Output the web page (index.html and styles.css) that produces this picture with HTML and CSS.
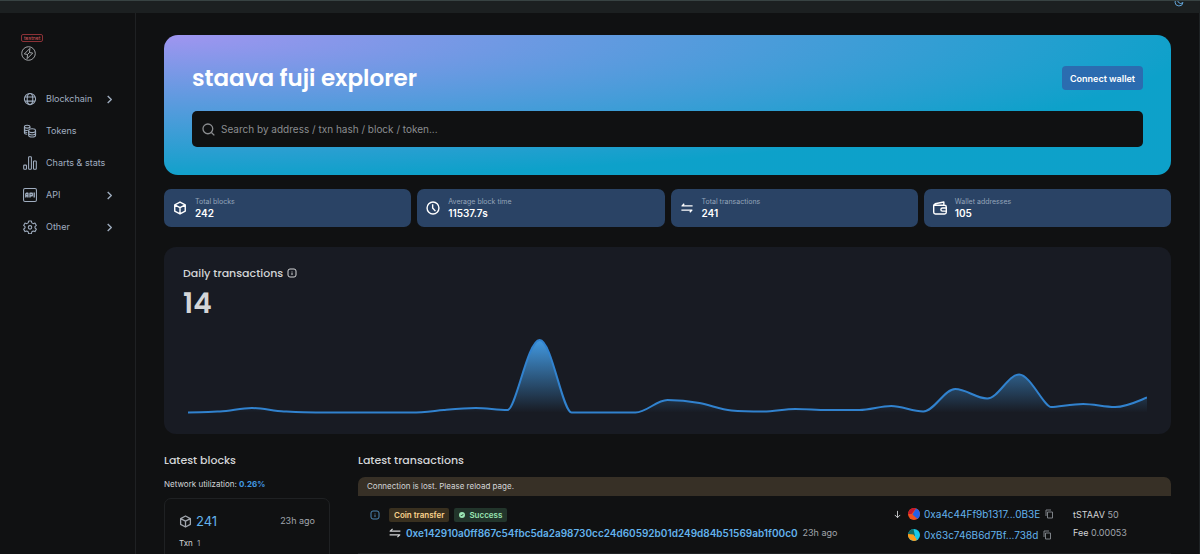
FILE: index.html
```html
<!DOCTYPE html>
<html lang="en">
<head>
  <meta charset="UTF-8">
  <meta name="viewport" content="width=device-width, initial-scale=1.0">
  <title>staava fuji explorer</title>
  <link rel="stylesheet" href="styles.css">
</head>
<body>

<!-- Shared icons -->
<svg class="sprite" aria-hidden="true">
  <symbol id="cube" viewBox="0 0 20 20">
    <path d="M10 1.500l7.500 4v9L10 18.500l-7.500-4v-9zM2.500 5.500l7.500 4 7.500-4M10 9.500v9"/>
  </symbol>
  <symbol id="chevron" viewBox="0 0 20 20">
    <path d="M6 2l8 8-8 8"/>
  </symbol>
  <symbol id="swap" viewBox="0 0 20 20">
    <path d="M19 7H2l4-4M1 13h17l-4 4"/>
  </symbol>
  <symbol id="info" viewBox="0 0 20 20">
    <rect x="2" y="2" width="16" height="16" rx="4"/>
    <path d="M10 9v5M10 6v1"/>
  </symbol>
  <symbol id="copy" viewBox="0 0 20 20">
    <path d="M7 6h10v12H7zM4 14V2h10"/>
  </symbol>
</svg>

<header class="topbar">
  <button class="theme-toggle" type="button" aria-label="Toggle color mode">
    <svg class="icon" viewBox="0 0 20 20"><path d="M9 2a8 8 0 1 0 9 9 5 5 0 0 1-9-9zM13 3v3M16 6h2"/></svg>
  </button>
</header>

<div class="layout">

  <!-- Sidebar -->
  <aside class="sidebar">
    <a class="brand" href="#" aria-label="Home">
      <span class="net-label">testnet</span>
      <svg class="logo" viewBox="0 0 32 32">
        <circle cx="16" cy="16" r="14.5"/>
        <path d="M19 5L7 17l7 1-1 9 12-12-7-1zM14 18l4-4"/>
      </svg>
    </a>
    <nav class="nav">
      <a class="nav-item" href="#">
        <svg class="nav-icon" viewBox="0 0 20 20"><circle cx="10" cy="10" r="8"/><ellipse cx="10" cy="10" rx="4" ry="8"/><path d="M3 7h14M3 13h14"/></svg>
        <span>Blockchain</span>
        <svg class="chevron"><use href="#chevron"/></svg>
      </a>
      <a class="nav-item" href="#">
        <svg class="nav-icon" viewBox="0 0 20 20"><path d="M2 4v8.500c0 1 2 2 4 2M2 4c0-3 8-3 8 0v2M2 4c0 2.500 8 2.500 8 0M2 7c0 2 2 2.500 5 2M2 10c0 1.500 2 2 4 2"/><ellipse cx="13" cy="9.500" rx="5" ry="2.800"/><path d="M8 10v6c0 3.500 10 3.500 10 0v-6M8 13c0 3.500 10 3.500 10 0"/></svg>
        <span>Tokens</span>
      </a>
      <a class="nav-item" href="#">
        <svg class="nav-icon" viewBox="0 0 20 20"><rect x="1" y="13" width="4" height="6" rx="1"/><rect x="8" y="1" width="4" height="18" rx="1"/><rect x="15" y="7" width="4" height="12" rx="1"/></svg>
        <span>Charts &amp; stats</span>
      </a>
      <a class="nav-item" href="#">
        <svg class="nav-icon" viewBox="0 0 20 20"><rect x="0.800" y="0.800" width="18.400" height="18.400" rx="2"/><path stroke-width="2" d="M4 13.500V8.500l1-1h2v6M4 11h3M10 13.500v-6h3.200V11H10M16 6.500v7"/></svg>
        <span>API</span>
        <svg class="chevron"><use href="#chevron"/></svg>
      </a>
      <a class="nav-item" href="#">
        <svg class="nav-icon" viewBox="0 0 20 20"><path d="M8 1.500h4l.6 2.600 2 1.100 2.500-.8 2 3.400-2 1.800v1.800l2 1.800-2 3.400-2.500-.8-2 1.100-.6 2.600H8l-.6-2.600-2-1.100-2.500.8-2-3.400 2-1.800V9.600l-2-1.800 2-3.400 2.500.8 2-1.100z"/><circle cx="10" cy="10.500" r="2.500"/></svg>
        <span>Other</span>
        <svg class="chevron"><use href="#chevron"/></svg>
      </a>
    </nav>
  </aside>

  <main class="content">

    <!-- Hero -->
    <section class="hero">
      <div class="hero-head">
        <h1>staava fuji explorer</h1>
        <button class="connect" type="button">Connect wallet</button>
      </div>
      <form class="search">
        <svg class="search-icon" viewBox="0 0 20 20"><circle cx="9" cy="9" r="7.500"/><path d="M14.500 14.500L19 19"/></svg>
        <input type="search" aria-label="Search" placeholder="Search by address / txn hash / block / token...">
      </form>
    </section>

    <!-- Stats -->
    <section class="stats">
      <div class="stat">
        <svg class="stat-icon"><use href="#cube"/></svg>
        <div>
          <div class="stat-label">Total blocks</div>
          <div class="stat-value">242</div>
        </div>
      </div>
      <div class="stat">
        <svg class="stat-icon" viewBox="0 0 20 20"><circle cx="10" cy="10" r="8.500"/><path d="M9.500 4.500V10l4 4.500"/></svg>
        <div>
          <div class="stat-label">Average block time</div>
          <div class="stat-value">11537.7s</div>
        </div>
      </div>
      <div class="stat">
        <svg class="stat-icon" viewBox="0 0 20 20"><path stroke-width="2" d="M18 7H3l3-3M2 13h15l-3 3"/></svg>
        <div>
          <div class="stat-label">Total transactions</div>
          <div class="stat-value">241</div>
        </div>
      </div>
      <div class="stat">
        <svg class="stat-icon" viewBox="0 0 20 20"><path d="M15.500 6V1.500L3 4C1.500 4.500 1 5 1 6.500V16q0 2.500 2.500 2.500h13Q19 18.500 19 16V8.500Q19 6 16.500 6H2M19 10h-5.500a2.200 2.200 0 0 0 0 4.500H19"/></svg>
        <div>
          <div class="stat-label">Wallet addresses</div>
          <div class="stat-value">105</div>
        </div>
      </div>
    </section>

    <!-- Daily transactions chart -->
    <section class="chart-card">
      <h2 class="chart-title">Daily transactions <svg class="info-icon"><use href="#info"/></svg></h2>
      <div class="chart-value">14</div>
      <svg class="chart" viewBox="0 0 960 76" preserveAspectRatio="none" role="img" aria-label="Daily transactions">
        <defs>
          <linearGradient id="area" x1="0" y1="0" x2="0" y2="1">
            <stop offset="0" stop-color="#4299e1"/>
            <stop offset="1" stop-color="#4299e1" stop-opacity="0"/>
          </linearGradient>
        </defs>
        <path class="chart-area" d="M0 74.500C11 74.500 21 74 32 73.500S53 70 64 70S85 73 96 73.500S117 74.500 128 74.500H224C235 74.500 245 73 256 72S277 70 288 70S309 72 320 72C328 72 340 2 352 2S375 74.500 384 74.500H448C459 74.500 469 62 480 62S501 63 512 65S533 71.500 544 72.500S565 73.500 576 73.500S597 71 608 71S629 72 640 72H672C683 72 693 68 704 68S725 73.500 736 73.500C747 73.500 757 51 768 51S789 60.500 800 60.500S821 36.500 832 36.500S857 69 864 69S885 66 896 66S917 69 928 69S949 64 960 59.500V74.500Z"/>
        <path class="chart-line" d="M0 74.500C11 74.500 21 74 32 73.500S53 70 64 70S85 73 96 73.500S117 74.500 128 74.500H224C235 74.500 245 73 256 72S277 70 288 70S309 72 320 72C328 72 340 2 352 2S375 74.500 384 74.500H448C459 74.500 469 62 480 62S501 63 512 65S533 71.500 544 72.500S565 73.500 576 73.500S597 71 608 71S629 72 640 72H672C683 72 693 68 704 68S725 73.500 736 73.500C747 73.500 757 51 768 51S789 60.500 800 60.500S821 36.500 832 36.500S857 69 864 69S885 66 896 66S917 69 928 69S949 64 960 59.500"/>
      </svg>
    </section>

    <div class="latest">

      <!-- Latest blocks -->
      <section class="blocks">
        <h2>Latest blocks</h2>
        <p class="utilization">Network utilization: <b>0.26%</b></p>
        <div class="block-card">
          <div class="block-head">
            <svg class="block-icon"><use href="#cube"/></svg>
            <a class="block-link" href="#">241</a>
            <span class="muted">23h ago</span>
          </div>
          <div class="block-row">Txn <span class="muted">1</span></div>
        </div>
      </section>

      <!-- Latest transactions -->
      <section class="transactions">
        <h2>Latest transactions</h2>
        <div class="alert" role="alert">Connection is lost. Please reload page.</div>
        <div class="tx">
          <svg class="tx-info"><use href="#info"/></svg>
          <div class="tx-main">
            <div class="tags">
              <span class="tag tag-coin">Coin transfer</span>
              <span class="tag tag-success">
                <svg class="tag-icon" viewBox="0 0 20 20"><circle cx="10" cy="10" r="10"/><path d="M6 10l3 3 5-6"/></svg>
                Success
              </span>
            </div>
            <div class="tx-hash">
              <svg class="swap-icon"><use href="#swap"/></svg>
              <a href="#">0xe142910a0ff867c54fbc5da2a98730cc24d60592b01d249d84b51569ab1f00c0</a>
              <span class="muted">23h ago</span>
            </div>
          </div>
          <div class="tx-route">
            <svg class="arrow" viewBox="0 0 20 20"><path d="M10 2v15M4 11l6 6 6-6"/></svg>
            <div class="tx-addresses">
              <div class="address">
                <svg class="avatar" viewBox="0 0 24 24"><circle cx="12" cy="12" r="12" fill="#f2501e"/><path d="M0 12A12 12 0 0 1 16 1L7 12z" fill="#c5162d"/><path d="M16 1a12 12 0 0 1 3 21L9 13z" fill="#2360e8"/></svg>
                <a href="#">0xa4c44Ff9b1317...0B3E</a>
                <button class="copy" type="button" aria-label="Copy address"><svg class="icon"><use href="#copy"/></svg></button>
              </div>
              <div class="address">
                <svg class="avatar" viewBox="0 0 24 24"><circle cx="12" cy="12" r="12" fill="#19c8e8"/><path d="M0 12A12 12 0 0 1 11 0l3 14z" fill="#126b63"/><path d="M0 10l11 1 7 11A12 12 0 0 1 0 10z" fill="#fb9a1b"/></svg>
                <a href="#">0x63c746B6d7Bf...738d</a>
                <button class="copy" type="button" aria-label="Copy address"><svg class="icon"><use href="#copy"/></svg></button>
              </div>
            </div>
          </div>
          <div class="tx-amount">
            <div>tSTAAV <span class="muted">50</span></div>
            <div>Fee <span class="muted">0.00053</span></div>
          </div>
        </div>
      </section>

    </div>
  </main>
</div>

</body>
</html>
```
FILE: styles.css
```css
* {
  box-sizing: border-box;
}

body {
  margin: 0;
  height: 100vh;
  overflow: hidden;
  display: flex;
  flex-direction: column;
  background: #101112;
  color: #d3d5d7;
  font-family: Inter, "Open Sans", sans-serif;
  font-size: 9px;
  line-height: 12px;
}

h1, h2, p {
  margin: 0;
}

h2 {
  font-family: Poppins, Inter, sans-serif;
  font-size: 11px;
  line-height: 16px;
  font-weight: 500;
}

a {
  color: #63b3ed;
  text-decoration: none;
}

button {
  font-family: inherit;
  border: none;
  padding: 0;
  background: none;
  cursor: pointer;
}

svg {
  display: block;
  flex: none;
  fill: none;
  stroke: currentColor;
  stroke-width: 2;
  stroke-linejoin: round;
}

.sprite {
  position: absolute;
  width: 0;
  height: 0;
}

.icon {
  width: 10px;
  height: 10px;
}

.muted {
  color: #a0a5ac;
  font-weight: 400;
}

/* Top bar */
.topbar {
  flex: none;
  height: 13px;
  display: flex;
  justify-content: flex-end;
  align-items: flex-start;
  padding-right: 16px;
  overflow: hidden;
  background: #1c2021;
  border-top: 1px solid #384343;
}

.theme-toggle {
  color: #63a5d8;
  margin-top: -4px;
}

.layout {
  flex: 1 0 auto;
  display: flex;
  border-right: 1px solid #1e2224;
}

/* Sidebar */
.sidebar {
  flex: none;
  width: 136px;
  padding: 21px 21px 0;
  border-right: 1px solid #1f2123;
}

.brand {
  display: flex;
  flex-direction: column;
  align-items: flex-start;
  gap: 4px;
  color: #a9acaf;
}

.net-label {
  padding: 0 2px;
  border: 1px solid #8c3237;
  border-radius: 2px;
  color: #d2555a;
  font-size: 5px;
  line-height: 6px;
}

.logo {
  width: 15px;
  height: 15px;
}

.nav {
  margin-top: 22px;
}

.nav-item {
  display: flex;
  align-items: center;
  gap: 9px;
  height: 32px;
  padding-left: 2px;
  color: #a0aec0;
}

.nav-icon {
  width: 14px;
  height: 14px;
  stroke-width: 1.5;
}

.chevron {
  width: 9px;
  height: 9px;
  margin-left: auto;
  stroke-width: 3;
}

/* Main column */
.content {
  flex: 1;
  min-width: 0;
  padding: 22px 28px 0;
}

.hero {
  padding: 28px;
  border-radius: 14px;
  background: radial-gradient(103% 103% at 0 0, rgba(183, 148, 244, 0.8) 0%, rgba(0, 163, 196, 0.8) 100%), #4299e1;
}

.hero-head {
  display: flex;
  justify-content: space-between;
  align-items: center;
  height: 30px;
  margin-bottom: 18px;
}

.hero h1 {
  color: #fff;
  font-family: Poppins, Inter, sans-serif;
  font-size: 23px;
  line-height: 28px;
  font-weight: 600;
}

.connect {
  height: 24px;
  padding: 0 8px;
  border-radius: 4px;
  background: #2b6cb0;
  color: #fff;
  font-size: 9px;
  font-weight: 600;
}

.search {
  display: flex;
  align-items: center;
  gap: 6px;
  height: 36px;
  padding: 0 10px;
  border-radius: 5px;
  background: #101112;
  color: #8b8d90;
}

.search-icon {
  width: 13px;
  height: 13px;
}

.search input {
  flex: 1;
  padding: 0;
  border: none;
  outline: none;
  background: none;
  color: #fff;
  font-family: inherit;
  font-size: 10px;
}

.search input::placeholder {
  color: #8b8d90;
  opacity: 1;
}

/* Stats */
.stats {
  display: grid;
  grid-template-columns: repeat(4, 1fr);
  gap: 6px;
  margin-top: 14px;
}

.stat {
  display: flex;
  align-items: center;
  gap: 8px;
  height: 38px;
  padding: 0 9px;
  border-radius: 7px;
  background: #2a4365;
  color: #fff;
}

.stat-icon {
  width: 14px;
  height: 14px;
}

.stat-label {
  color: #94a3ba;
  font-size: 7px;
  line-height: 10px;
}

.stat-value {
  font-size: 10px;
  font-weight: 600;
}

/* Chart */
.chart-card {
  margin-top: 20px;
  padding: 18px 19px 20px;
  border-radius: 12px;
  background: #181b23;
}

.chart-title {
  display: flex;
  align-items: center;
  gap: 4px;
}

.info-icon {
  width: 10px;
  height: 10px;
}

.chart-value {
  margin-top: 5px;
  font-family: Poppins, Inter, sans-serif;
  font-size: 28px;
  line-height: 36px;
  font-weight: 600;
}

.chart {
  width: 100%;
  height: 76px;
  margin-top: 16px;
  padding: 0 5px;
}

.chart-area {
  fill: url(#area);
  stroke: none;
}

.chart-line {
  stroke: #3182ce;
  stroke-width: 2;
  vector-effect: non-scaling-stroke;
}

/* Latest blocks and transactions */
.latest {
  display: flex;
  gap: 28px;
  margin-top: 18px;
}

.blocks {
  flex: none;
  width: 166px;
}

.utilization {
  margin-top: 10px;
  font-size: 8px;
}

.utilization b {
  color: #4299e1;
  font-weight: 700;
}

.block-card {
  height: 84px;
  margin-top: 8px;
  padding: 14px;
  border: 1px solid #1f2123;
  border-radius: 7px;
}

.block-head {
  display: flex;
  align-items: center;
  gap: 4px;
  line-height: 16px;
}

.block-head .muted {
  margin-left: auto;
}

.block-icon {
  width: 13px;
  height: 13px;
  color: #a0a5ac;
}

.block-link {
  font-size: 13px;
}

.block-row {
  margin-top: 8px;
  font-size: 8px;
}

.block-row .muted {
  margin-left: 2px;
}

.transactions {
  flex: 1;
  min-width: 0;
}

.alert {
  margin-top: 9px;
  padding: 3px 9px 4px;
  border-radius: 7px 7px 0 0;
  background: #373026;
  font-size: 8px;
}

.tx {
  display: flex;
  align-items: flex-start;
  padding: 12px 9px;
  border-bottom: 1px solid #1f2123;
}

.tx-info {
  width: 10px;
  height: 10px;
  margin: 2px 9px 0 3px;
  color: #4d86b3;
}

.tx-main {
  flex: 1;
  min-width: 0;
}

.tags {
  display: flex;
  gap: 5px;
}

.tag {
  display: flex;
  align-items: center;
  gap: 4px;
  padding: 1px 5px;
  border-radius: 2px;
  font-size: 8px;
  font-weight: 600;
}

.tag-coin {
  background: #39301f;
  color: #fbd38d;
}

.tag-success {
  background: #22352b;
  color: #9ae6b4;
}

.tag-icon {
  width: 6px;
  height: 6px;
  fill: #9ae6b4;
  stroke: none;
}

.tag-icon path {
  fill: none;
  stroke: #22352b;
  stroke-width: 3;
}

.tx-hash {
  display: flex;
  align-items: center;
  gap: 5px;
  margin-top: 5px;
}

.tx-hash a {
  font-size: 10px;
  font-weight: 600;
}

.swap-icon {
  width: 12px;
  height: 12px;
}

.tx-route {
  display: flex;
  gap: 6px;
  width: 180px;
}

.arrow {
  width: 9px;
  height: 9px;
  margin-top: 2px;
}

.tx-addresses {
  display: flex;
  flex-direction: column;
  gap: 9px;
}

.address {
  display: flex;
  align-items: center;
  gap: 4px;
  font-size: 10px;
}

.avatar {
  width: 12px;
  height: 12px;
  stroke: none;
}

.copy {
  color: #7c8186;
}

.tx-amount {
  display: flex;
  flex-direction: column;
  gap: 6px;
  width: 89px;
  padding-top: 1px;
}
```
